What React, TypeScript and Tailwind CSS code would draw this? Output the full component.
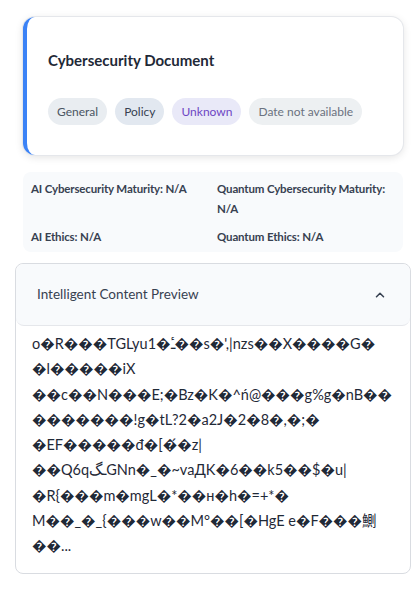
import React from "react";

const lines: string[] = [
  "o\uFFFDR\uFFFD\uFFFD\uFFFDTGLyu1\uFFFDـٔ\uFFFD\uFFFDs\uFFFD',|nzs\uFFFD\uFFFDX\uFFFD\uFFFD\uFFFD\uFFFDG\uFFFD",
  "\uFFFDl\uFFFD\uFFFD\uFFFD\uFFFD\uFFFDiX",
  "\uFFFD\uFFFDc\uFFFD\uFFFDN\uFFFD\uFFFD\uFFFDE;\uFFFDBz\uFFFDK\uFFFD^ń@\uFFFD\uFFFD\uFFFDg%g\uFFFDnB\uFFFD\uFFFD",
  "\uFFFD\uFFFD\uFFFD\uFFFD\uFFFD\uFFFD\uFFFD!g\uFFFDtL?2\uFFFDa2J\uFFFD2\uFFFD8\uFFFD,\uFFFD;\uFFFD",
  "\uFFFDEF\uFFFD\uFFFD\uFFFD\uFFFD\uFFFDđ\uFFFD[\uFFFD́\uFFFDz|",
  "\uFFFD\uFFFDQ6qـگGNn\uFFFD_\uFFFD~vaДK\uFFFD6\uFFFD\uFFFDk5\uFFFD\uFFFD$\uFFFDu|",
  "\uFFFDR{\uFFFD\uFFFD\uFFFDm\uFFFDmgL\uFFFD*\uFFFD\uFFFDн\uFFFDh\uFFFD=+*\uFFFD",
  "M\uFFFD\uFFFD_\uFFFD_{\uFFFD\uFFFD\uFFFDw\uFFFD\uFFFDM°\uFFFD\uFFFD[\uFFFDHgE e\uFFFDF\uFFFD\uFFFD\uFFFD鰂",
  "\uFFFD\uFFFD...",
];

const Badge = ({ label, cls }: { label: string; cls: string }) => (
  <span className={`rounded-full px-[9px] h-[27px] flex items-center text-[12px] ${cls}`}>{label}</span>
);

const App: React.FC = () => {
  return (
    <div
      className="w-[418px] min-h-[595px] bg-white pt-[17px]"
      style={{ fontFamily: "'Lato', 'Noto Sans', 'Noto Sans CJK JP', sans-serif" }}
    >
      {/* header card */}
      <div className="ml-[23px] w-[380px] h-[138px] rounded-xl bg-white border-l-4 border-[#3b82f6] shadow-[0_2px_8px_rgba(0,0,0,0.12)] ring-1 ring-[#e5e7eb] pl-[21px] pt-[33px]">
        <h2 className="text-[15px] font-bold text-[#1f2937] leading-[21px]">Cybersecurity Document</h2>
        <div className="flex gap-2 mt-[27px]">
          <Badge label="General" cls="bg-[#e9edf1] text-[#4b5563]" />
          <Badge label="Policy" cls="bg-[#e2e8f0] text-[#374151]" />
          <Badge label="Unknown" cls="bg-[#e9e9f8] text-[#6d46c4]" />
          <Badge label="Date not available" cls="bg-[#edf0f2] text-[#6b7280]" />
        </div>
      </div>

      {/* scores */}
      <div className="ml-[23px] w-[380px] mt-[17px] rounded-lg bg-[#f8fafc] px-[8px] pt-[7px] pb-[5px] grid grid-cols-[186px_1fr] gap-y-[8px] text-[11.5px] tracking-[-0.15px] font-bold text-[#374151] leading-[20px]">
        <div>AI Cybersecurity Maturity: N/A</div>
        <div>Quantum Cybersecurity Maturity: N/A</div>
        <div>AI Ethics: N/A</div>
        <div>Quantum Ethics: N/A</div>
      </div>

      {/* preview accordion */}
      <div className="ml-[15px] w-[396px] mt-[11px] rounded-lg border border-[#d9dce1] bg-white">
        <div className="h-[62px] rounded-lg border-b border-[#e5e7eb] bg-[#f8fafc] flex items-center justify-between pl-[21px] pr-[23px]">
          <span className="text-[13.5px] text-[#374151]">Intelligent Content Preview</span>
          <svg width="14" height="14" viewBox="0 0 24 24" fill="none" stroke="#374151" strokeWidth="2.6" strokeLinecap="round" strokeLinejoin="round">
            <path d="M6 15l6-6 6 6" />
          </svg>
        </div>
        <div className="px-[16px] pt-[5px] pb-[15px] text-[14.5px] leading-[25.25px] text-[#1f2937]">
          {lines.map((l, i) => (
            <div key={i} className="whitespace-nowrap">{l}</div>
          ))}
        </div>
      </div>
    </div>
  );
};

export default App;
